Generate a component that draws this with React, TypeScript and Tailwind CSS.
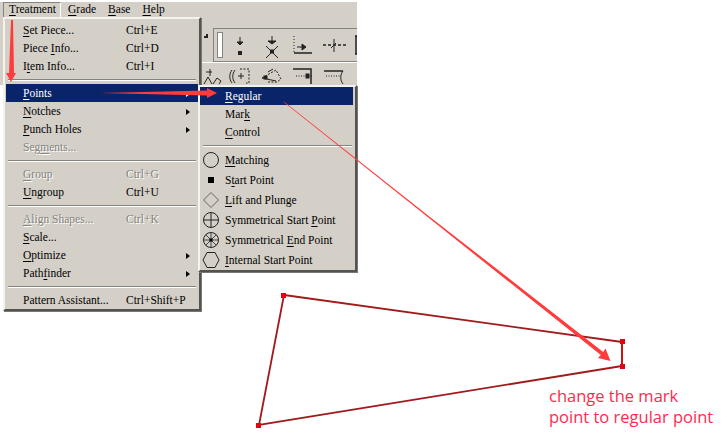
import React from "react";

type Item =
  | { sep: true }
  | { pre?: string; ul?: string; post?: string; key?: string; sub?: boolean; off?: boolean; on?: boolean };

const mainItems: Item[] = [
  { ul: "S", post: "et Piece...", key: "Ctrl+E" },
  { pre: "Piece ", ul: "I", post: "nfo...", key: "Ctrl+D" },
  { pre: "I", ul: "t", post: "em Info...", key: "Ctrl+I" },
  { sep: true },
  { ul: "P", post: "oints", sub: true, on: true },
  { ul: "N", post: "otches", sub: true },
  { ul: "P", post: "unch Holes", sub: true },
  { pre: "Seg", ul: "m", post: "ents...", off: true },
  { sep: true },
  { ul: "G", post: "roup", key: "Ctrl+G", off: true },
  { ul: "U", post: "ngroup", key: "Ctrl+U" },
  { sep: true },
  { ul: "A", post: "lign Shapes...", key: "Ctrl+K", off: true },
  { ul: "S", post: "cale..." },
  { ul: "O", post: "ptimize", sub: true },
  { pre: "Path", ul: "f", post: "inder", sub: true },
  { sep: true },
  { pre: "Pattern Assistant...", key: "Ctrl+Shift+P" },
];

const serif = "font-['Liberation_Serif',serif] text-[11.5px] leading-none";
const sunken = "border-t-[#f4f2ec] border-l-[#f4f2ec] border-r-[#55534e] border-b-[#55534e]";

function Label({ pre, ul, post }: { pre?: string; ul?: string; post?: string }) {
  return (
    <span className="whitespace-nowrap">
      {pre}
      {ul && <span className="underline underline-offset-2">{ul}</span>}
      {post}
    </span>
  );
}

function Separator() {
  return (
    <div className="h-[9px] flex flex-col justify-center px-[3px]">
      <div className="h-[1px] bg-[#85837d]" />
      <div className="h-[1px] bg-white" />
    </div>
  );
}

function MainMenu() {
  return (
    <div className={`absolute left-[3px] top-[17px] w-[198px] h-[294px] pt-[2px] border-2 ${sunken} bg-[#d4d0c8] ${serif} text-black shadow-[1px_1px_0_#777]`}>
      {mainItems.map((it, i) => {
        if ("sep" in it) return <Separator key={i} />;
        return (
          <div
            key={i}
            className={`h-[18px] mx-px pt-[2px] flex items-center pl-[17px] ${it.on ? "bg-[#0a246a] text-white" : ""} ${
              it.off ? "text-[#85837d] [text-shadow:1px_1px_0_#fff]" : ""
            }`}
          >
            <div className="w-[103px]">
              <Label pre={it.pre} ul={it.ul} post={it.post} />
            </div>
            <div className="whitespace-nowrap">{it.key}</div>
            {it.sub && <div className={`ml-auto mr-[8px] w-0 h-0 border-y-[3.5px] border-y-transparent border-l-[4px] ${it.on ? "border-l-white" : "border-l-black"}`} />}
          </div>
        );
      })}
    </div>
  );
}

function PointIcon({ kind }: { kind: string }) {
  return (
    <svg width="18" height="18" viewBox="0 0 18 18" fill="none" stroke="#222" strokeWidth="1">
      {kind === "circle" && <circle cx="9" cy="9" r="7.5" />}
      {kind === "square" && <rect x="6" y="6" width="6" height="6" fill="#000" stroke="none" />}
      {kind === "diamond" && <path d="M9 1.5 16.5 9 9 16.5 1.5 9Z" stroke="#66645f" />}
      {kind === "cross" && (
        <>
          <circle cx="9" cy="9" r="7.5" />
          <path d="M1.5 9h15M9 1.5v15" />
        </>
      )}
      {kind === "star" && (
        <>
          <circle cx="9" cy="9" r="7.5" />
          <path d="M1.5 9h15M9 1.5v15M3.7 3.7l10.6 10.6M14.3 3.7 3.7 14.3" stroke="#444" />
          <rect x="7.5" y="7.5" width="3" height="3" fill="#000" stroke="none" />
        </>
      )}
      {kind === "hex" && <path d="M5 1.5h8L17 9l-4 7.5H5L1 9Z" />}
    </svg>
  );
}

function SubRow({ icon, pre, ul, post }: { icon: string; pre?: string; ul?: string; post?: string }) {
  return (
    <div className="h-[20px] flex items-center pl-[2px] gap-[5px]">
      <PointIcon kind={icon} />
      <span className="pt-[2px]">
        <Label pre={pre} ul={ul} post={post} />
      </span>
    </div>
  );
}

function SubMenu() {
  return (
    <div className={`absolute left-[198px] top-[85px] w-[159px] h-[187px] border-2 ${sunken} bg-[#d4d0c8] ${serif} text-black shadow-[1px_1px_0_#777]`}>
      <div className="h-[18px] pt-[2px] flex items-center pl-[25px] bg-[#0a246a] text-white mr-[2px]">
        <Label ul="R" post="egular" />
      </div>
      <div className="h-[18px] pt-[2px] flex items-center pl-[25px]">
        <Label pre="Mar" ul="k" />
      </div>
      <div className="h-[18px] pt-[2px] flex items-center pl-[25px]">
        <Label ul="C" post="ontrol" />
      </div>
      <Separator />
      <SubRow icon="circle" ul="M" post="atching" />
      <SubRow icon="square" pre="S" ul="t" post="art Point" />
      <SubRow icon="diamond" ul="L" post="ift and Plunge" />
      <SubRow icon="cross" pre="Symmetrical Start " ul="P" post="oint" />
      <SubRow icon="star" pre="Symmetrical " ul="E" post="nd Point" />
      <SubRow icon="hex" ul="I" post="nternal Start Point" />
    </div>
  );
}

function ToolIcons() {
  return (
    <svg className="absolute left-[201px] top-[25px]" width="156" height="60" viewBox="201 25 156 60" fill="none" stroke="#222" strokeWidth="1">
      <path d="M204 37h3v-3" strokeWidth="2" />
      <path d="M240 37v5M237 42h6l-3 3Z" fill="#222" />
      <rect x="238.500" y="51.500" width="3" height="3" fill="#222" />
      <path d="M272 36v5M268 41h8l-4 3Z" fill="#222" />
      <path d="M266 46l12 12M278 46l-12 12" />
      <rect x="270.500" y="50" width="3" height="3" fill="#222" />
      <path d="M294 36v17" strokeDasharray="1 2" />
      <path d="M297 47h7M302 44l4 3-4 3Z" fill="#222" />
      <path d="M294 53h18" strokeWidth="1.500" />
      <path d="M323 45h23" strokeDasharray="3 2" strokeWidth="1.500" />
      <path d="M334 39v13M331 48l5-5" />
      <path d="M355 36h3M356 36v18M355 54h3" strokeWidth="1.500" />
      <path d="M206 72h6M210 69v7" />
      <path d="M204 84l4-7 4 7M213 84l4-6 4 3-2 3" />
      <path d="M232 70c-3 4-3 9 0 13M235 70c-3 4-3 9 0 13" />
      <path d="M240 69h9v14h-3" strokeDasharray="2 1.500" />
      <path d="M238 76h6M241 73v6" />
      <path d="M262 78l14-8 5 9-4 3h-9" strokeDasharray="2 1.500" />
      <path d="M262 78l14 3M268 72l5-3" />
      <rect x="264" y="76" width="3" height="3" fill="#222" />
      <path d="M293 69h18v15" strokeWidth="1.500" />
      <path d="M296 76h16" strokeDasharray="1 1.500" />
      <rect x="306" y="74" width="3" height="4" fill="#222" />
      <path d="M324 71h19" strokeWidth="1.500" />
      <path d="M326 76h14" strokeDasharray="1 1.500" />
      <path d="M343 71c-3 4-3 9 0 13" />
    </svg>
  );
}

function Toolbar() {
  return (
    <div className="absolute left-0 top-[2px] w-[357px] h-[83px] bg-[#d4d0c8]">
      <div className={`flex items-center h-[16px] pl-[3px] ${serif} text-black`}>
        <div className="w-[58px] h-[16px] pl-px flex items-center justify-center border border-t-[#85837d] border-l-[#85837d] border-r-white border-b-white">
          <Label ul="T" post="reatment" />
        </div>
        <div className="pl-[7px] pr-[12px]"><Label ul="G" post="rade" /></div>
        <div className="pr-[12px]"><Label ul="B" post="ase" /></div>
        <div><Label ul="H" post="elp" /></div>
      </div>
      <div className="mt-[10px] ml-[213px] h-[34px] border-t border-l border-b border-t-[#85837d] border-l-[#85837d] border-b-[#85837d] flex items-center pl-[3px]">
        <div className="w-[6px] h-[26px] border border-[#85837d] bg-white" />
      </div>
      <div className="ml-[201px] h-px bg-white" />
    </div>
  );
}

function Shape() {
  return (
    <svg className="absolute inset-0" width="728" height="440" viewBox="0 0 728 440" fill="none">
      <path d="M284 295 622 342" stroke="#a01c1c" strokeWidth="1.800" />
      <path d="M284 295 259 425 622 366" stroke="#a01c1c" strokeWidth="1.800" />
      <path d="M622 342V366" stroke="#cc1111" strokeWidth="2" />
      <rect x="281" y="293" width="5" height="5" fill="#e60012" />
      <rect x="620" y="339" width="5" height="5" fill="#e60012" />
      <rect x="620" y="364" width="5" height="5" fill="#e60012" />
      <rect x="256" y="423" width="5" height="5" fill="#e60012" />
    </svg>
  );
}

function Arrows() {
  return (
    <svg className="absolute inset-0" width="728" height="440" viewBox="0 0 728 440" fill="#ff3b3b">
      <path d="M11 20h2l1 53H16l-5 9-5-9h3Z" />
      <path d="M100 93 207 90.500 V88 L217 93 207 98 V95.500Z" />
      <path d="M284.200 101.700 431.200 217.900 603.200 351.900 605.500 348.500 610.500 361 598 358 600.800 355.100 430.200 219.100 283.800 102.300Z" />
    </svg>
  );
}

export default function App() {
  return (
    <div className="relative w-[728px] h-[440px] bg-white overflow-hidden">
      <Toolbar />
      <ToolIcons />
      <MainMenu />
      <SubMenu />
      <Shape />
      <Arrows />
      <div className="absolute left-[549px] top-[385px] font-['Open_Sans',sans-serif] text-[16.5px] leading-[21px] text-[#ff2a50] whitespace-nowrap">
        change the mark
        <br />
        point to regular point
      </div>
    </div>
  );
}
